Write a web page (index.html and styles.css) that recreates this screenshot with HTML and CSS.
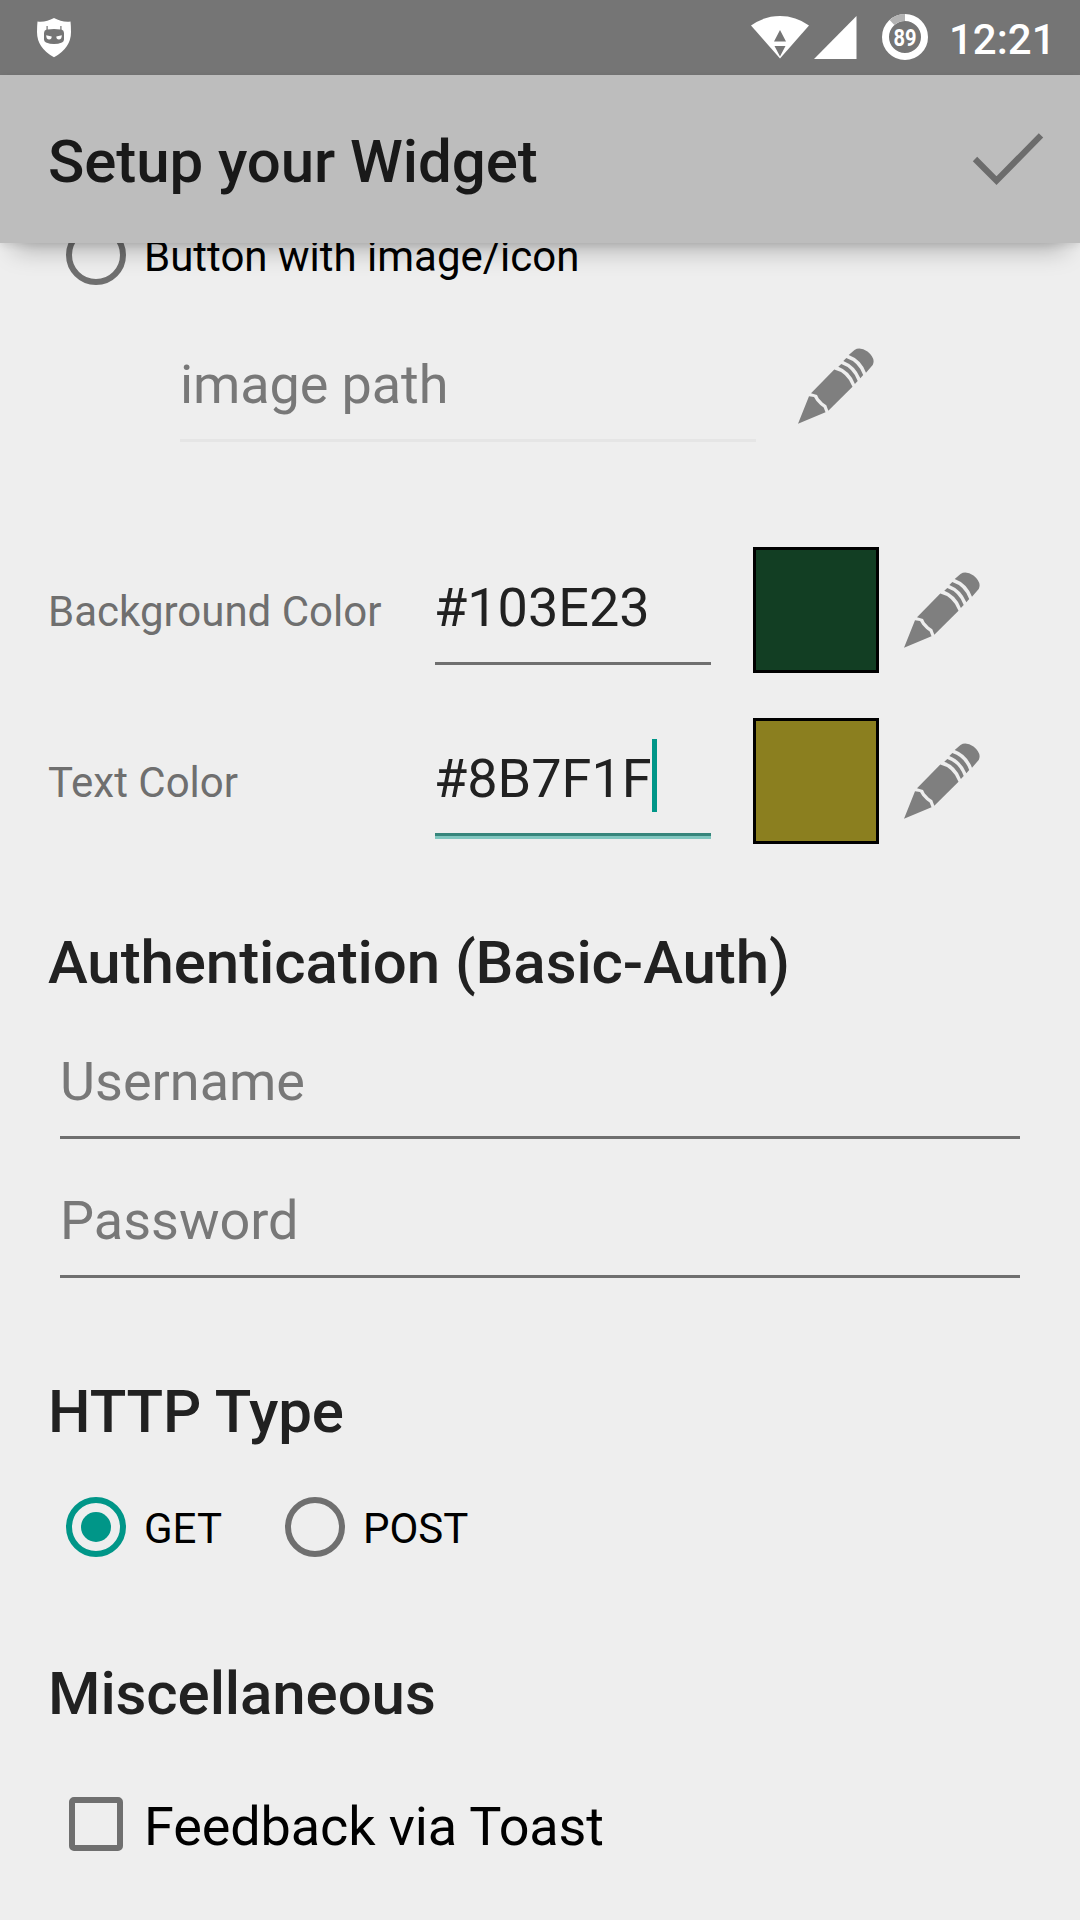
FILE: index.html
```html
<!DOCTYPE html>
<html lang="en">
<head>
<meta charset="utf-8">
<title>Setup your Widget</title>
<link rel="stylesheet" href="styles.css">
</head>
<body>
<svg class="defs" width="0" height="0" aria-hidden="true">
  <symbol id="pencil" viewBox="0 0 76 76">
    <path d="M0 75.700 11 48.300 16 48.900 18.300 52.800 22.300 57 25.700 59.400 27.500 64.300Z"/>
    <path d="M13 45.300 36.300 21.500Q49 24.500 54.500 38.700L30.300 62.700 28.300 57.300 24.700 54.700 20.600 50.300 19 47Z"/>
    <path d="M40.300 18.700 43.300 16Q55 20 59.700 33L56.900 35.900Q52 23 40.300 18.700Z"/>
    <path d="M45.300 13 48.300 10Q60.500 14 65.200 27L62.400 30.300Q57 17.500 45.300 13Z"/>
    <path d="M50.700 7 56.500 2Q62-1.500 69.500 3.500 78 10.500 74.700 17L68 24.700Q63 11.500 50.700 7Z"/>
  </symbol>
</svg>

<header class="status-bar">
  <svg class="shield" width="34" height="40" viewBox="0 0 34 40">
    <path fill="#fff" d="M17 0Q9 4.500 .5 3.500 0 8 0 14 0 30 17 39.300 34 30 34 14 34 8 33.500 3.500 25 4.500 17 0Z"/>
    <path fill="#757575" d="M9.500 8h1.200v3.400Q17 10.700 23.300 11.400V8h1.200v3.600Q27 12.500 27 15v6.500q0 2-2 3Q17 27.500 9 24.500q-2-1-2-3V15Q7 12.500 9.500 11.600Z"/>
    <path fill="#fff" d="M9.200 17.300l5.500 1.200q0 3-2.500 3-3 0-3-4.200ZM24.800 17.300l-5.500 1.200q0 3 2.500 3 3 0 3-4.200Z"/>
  </svg>
  <div class="status-icons">
    <svg class="wifi" width="58" height="44" viewBox="0 0 58 44">
      <path fill="#fff" d="M0 9.500Q13 0 29 0T58 9.500L29 42.500Z"/>
      <path fill="#757575" d="M29 14 35 25.500H23ZM23.500 30H34.500L29 40.500Z"/>
    </svg>
    <svg class="signal" width="43" height="43" viewBox="0 0 43 43"><path fill="#fff" d="M0 43 42.500 0V43Z"/></svg>
    <svg class="battery" width="46" height="46" viewBox="0 0 46 46">
      <circle cx="23" cy="23" r="19.500" fill="none" stroke="#fff" stroke-width="7"/>
      <path d="M10 8.500A19.500 19.500 0 0 1 23 3.500" fill="none" stroke="#b3b3b3" stroke-width="7"/>
      <text class="battery-level" x="23" y="31.500" text-anchor="middle" textLength="23" lengthAdjust="spacingAndGlyphs">89</text>
    </svg>
    <span class="clock">12:21</span>
  </div>
</header>

<div class="app-bar">
  <h1 class="title">Setup your Widget</h1>
  <svg class="check" width="72" height="54" viewBox="0 0 72 54"><path d="M3 27 24.500 48.700 69 3.300" fill="none" stroke="#6c6c6c" stroke-width="6.200"/></svg>
</div>

<main class="content">
  <label class="choice image-choice"><span class="radio"></span><span class="choice-text">Button with image/icon</span></label>

  <div class="image-row">
    <div class="field image-field">image path</div>
    <svg class="pencil" width="76" height="76"><use href="#pencil"/></svg>
  </div>

  <div class="color-row">
    <span class="color-label">Background Color</span>
    <div class="field color-field">#103E23</div>
    <span class="swatch green"></span>
    <svg class="pencil" width="76" height="76"><use href="#pencil"/></svg>
  </div>
  <div class="color-row">
    <span class="color-label">Text Color</span>
    <div class="field color-field focused">#8B7F1F<span class="caret"></span></div>
    <span class="swatch olive"></span>
    <svg class="pencil" width="76" height="76"><use href="#pencil"/></svg>
  </div>

  <h2 class="heading auth-heading">Authentication (Basic-Auth)</h2>
  <div class="field auth-field">Username</div>
  <div class="field auth-field">Password</div>

  <h2 class="heading http-heading">HTTP Type</h2>
  <div class="choices">
    <label class="choice"><span class="radio selected"></span><span class="choice-text">GET</span></label>
    <label class="choice"><span class="radio"></span><span class="choice-text">POST</span></label>
  </div>

  <h2 class="heading misc-heading">Miscellaneous</h2>
  <label class="toast"><span class="checkbox"></span><span>Feedback via Toast</span></label>
</main>
</body>
</html>
```
FILE: styles.css
```css
* { box-sizing: border-box; }

body {
  margin: 0;
  width: 1080px;
  height: 1920px;
  overflow: hidden;
  background: #eee;
  color: #000;
  font-family: Roboto, "Liberation Sans", sans-serif;
}

svg { display: block; flex: none; }
.defs { position: absolute; }

/* Status bar */
.status-bar {
  display: flex;
  justify-content: space-between;
  height: 75px;
  padding: 0 27px 0 37px;
  background: #757575;
}
.shield { margin-top: 18px; }
.status-icons { display: flex; }
.wifi { margin: 16px 5px 0 0; }
.signal { margin: 16px 25px 0 0; }
.battery { margin: 14px 21px 0 0; }
.battery-level { font-size: 24px; font-weight: 700; fill: #fff; }
.clock {
  width: 104px;
  margin-top: 15px;
  font-size: 42px;
  font-weight: 500;
  line-height: 49px;
  color: #fff;
  white-space: nowrap;
}

/* App bar */
.app-bar {
  position: relative;
  z-index: 1;
  display: flex;
  justify-content: space-between;
  height: 168px;
  padding: 0 36px 0 48px;
  background: #bdbdbd;
  box-shadow: 0 2px 8px rgba(0, 0, 0, .1), 0 20px 24px -14px rgba(0, 0, 0, .28);
}
.title {
  margin: 52px 0 0;
  font-size: 60px;
  font-weight: 500;
  line-height: 70px;
  letter-spacing: -.08px;
  color: #191919;
}
.check { margin-top: 57px; }

/* Form */
.content { margin-top: -18px; padding: 0 60px 0 48px; }

.choice { display: flex; align-items: center; height: 60px; margin-left: 18px; }
.radio {
  display: flex;
  align-items: center;
  justify-content: center;
  width: 60px;
  height: 60px;
  border: 6px solid #6f6f6f;
  border-radius: 50%;
}
.radio.selected { border-color: #009688; }
.radio.selected::after {
  content: "";
  width: 30px;
  height: 30px;
  border-radius: 50%;
  background: #009688;
}
.choice-text { margin: 2px 0 0 18px; font-size: 42px; line-height: 49px; }
.choices { display: flex; gap: 45px; margin-top: 50px; }

.field {
  font-size: 54px;
  line-height: 63px;
  color: #787878;
  border-bottom: 3px solid #6f6f6f;
}

.image-row { display: flex; gap: 42px; margin-top: 63px; padding-left: 132px; }
.image-field { width: 576px; height: 94px; padding-top: 5px; letter-spacing: -.1px; border-color: #e5e5e5; }
.pencil { fill: #7f7f7f; }

.color-row { display: flex; height: 126px; margin-bottom: 45px; }
.image-row + .color-row { margin-top: 105px; }
.color-label {
  width: 387px;
  margin-top: 40px;
  font-size: 42px;
  line-height: 49px;
  color: #6f6f6f;
}
.color-field {
  display: flex;
  width: 276px;
  height: 118px;
  margin-right: 42px;
  padding-top: 29px;
  color: #212121;
  text-indent: -1px;
}
.focused { height: 121px; border-bottom: 3px solid #80c6bf; box-shadow: inset 0 -3px #36857b; }
.caret { width: 5px; height: 73px; margin-top: -8px; background: #009688; }
.swatch { width: 126px; height: 126px; margin-right: 25px; border: 3px solid #000; }
.green { background: #123e23; }
.olive { background: #8b7f1f; }
.color-row .pencil { margin-top: 25px; }

.heading {
  margin: 0;
  font-size: 60px;
  font-weight: 500;
  line-height: 70px;
  letter-spacing: -.09px;
  color: #212121;
}
.auth-heading { margin-top: 84px; }
.auth-field { width: 960px; height: 89px; margin: 50px 0 0 12px; }
.auth-heading + .auth-field { margin-top: 52px; }
.http-heading { margin-top: 99px; }
.misc-heading { margin-top: 102px; }

.toast {
  display: flex;
  gap: 21px;
  margin: 66px 0 0 21px;
  font-size: 54px;
  line-height: 63px;
  letter-spacing: -.12px;
}
.checkbox { width: 54px; height: 54px; margin-top: 2px; border: 6px solid #6f6f6f; border-radius: 5px; }
```
